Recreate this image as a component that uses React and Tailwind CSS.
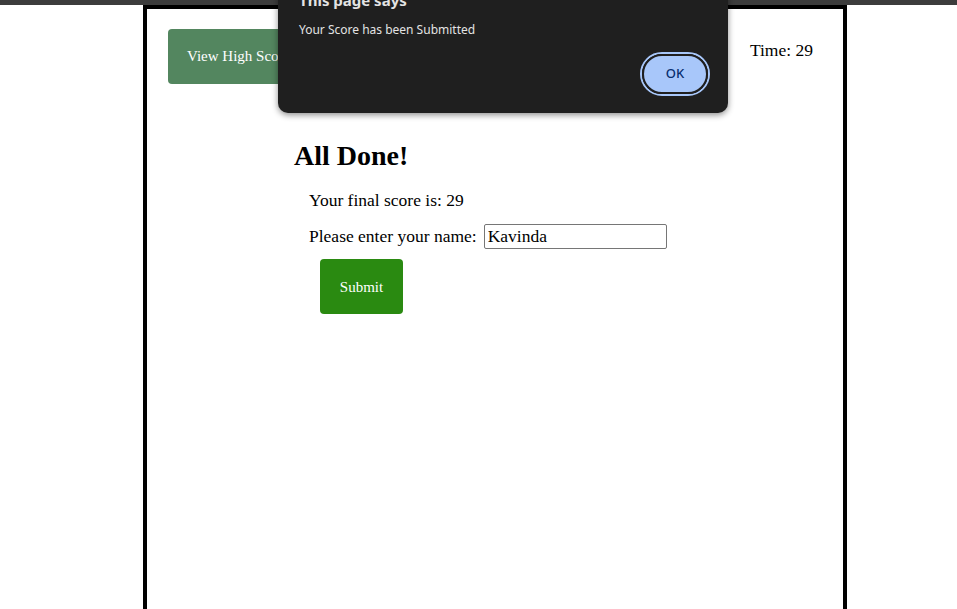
export default function App() {
  return (
    <div className="relative h-[609px] w-[957px] overflow-hidden bg-white" style={{ fontFamily: '"Liberation Serif", serif' }}>
      <div className="h-[5px] w-full bg-[#3c3c3c]" />
      <div className="ml-[143px] h-[700px] w-[704px] border-4 border-black bg-white">
        <div className="flex items-start justify-between pl-[21px] pr-[30px] pt-[20px]">
          <button className="h-[55px] w-[160px] rounded-[4px] bg-[#53865f] pl-[19px] text-left text-[15px] text-white">
            View High Scores
          </button>
          <div className="mt-[8px] text-[17.5px] text-black">Time: 29</div>
        </div>
        <div className="ml-[147px] mt-[57px]">
          <h2 className="text-[28px] font-bold leading-[30px] text-black">All Done!</h2>
          <div className="ml-[15px] mt-[18px] text-[17.5px] leading-[22px] text-black">Your final score is: 29</div>
          <div className="ml-[15px] mt-[12px] flex items-center text-[17.5px] text-black">
            <span>Please enter your name:</span>
            <input
              readOnly
              value="Kavinda"
              className="ml-[7px] h-[25px] w-[183px] rounded-[2px] border border-[#767676] px-[3px] text-[17.5px] text-black outline-none"
              style={{ fontFamily: '"Liberation Serif", serif' }}
            />
          </div>
          <button className="ml-[26px] mt-[10px] h-[55px] w-[83px] rounded-[4px] bg-[#2a8a11] text-[15px] text-white">
            Submit
          </button>
        </div>
      </div>

      <div
        className="absolute left-[278px] top-[-30px] h-[143px] w-[450px] rounded-b-[10px] bg-[#1f1f1f] shadow-[0_2px_6px_rgba(0,0,0,0.45)]"
        style={{ fontFamily: '"Noto Sans", sans-serif' }}
      >
        <div className="pl-[21px] pt-[20px] text-[15px] font-bold leading-[20px] text-[#e3e3e3]">This page says</div>
        <div className="pl-[21px] pt-[12px] text-[12px] leading-[16px] text-[#e3e3e3]">Your Score has been Submitted</div>
        <div className="flex justify-end pr-[18px] pt-[14px]">
          <div className="rounded-full border-2 border-[#a8c7fa] p-0">
            <button className="flex h-[40px] w-[66px] items-center justify-center rounded-full border-2 border-[#1f1f1f] bg-[#a8c7fa] text-[13px] font-medium text-[#062e6f]">
              OK
            </button>
          </div>
        </div>
      </div>
    </div>
  );
}
